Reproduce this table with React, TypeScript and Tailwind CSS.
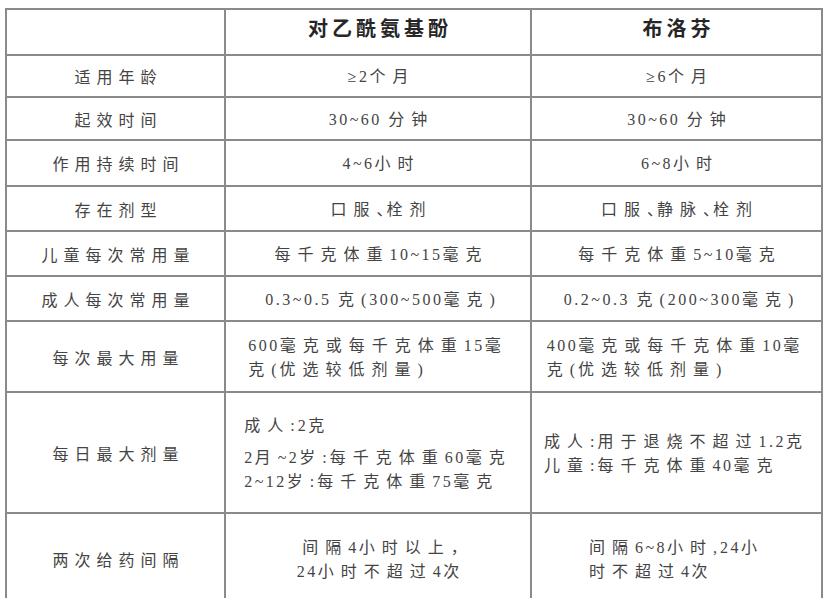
type Cell = { lines: string[]; block?: boolean; gapFirst?: boolean };

const rows: { label: string; a: Cell; b: Cell }[] = [
  { label: "适用年龄", a: { lines: ["≥2个月"] }, b: { lines: ["≥6个月"] } },
  { label: "起效时间", a: { lines: ["30~60 分钟"] }, b: { lines: ["30~60 分钟"] } },
  { label: "作用持续时间", a: { lines: ["4~6小时"] }, b: { lines: ["6~8小时"] } },
  { label: "存在剂型", a: { lines: ["口服、栓剂"] }, b: { lines: ["口服、静脉、栓剂"] } },
  { label: "儿童每次常用量", a: { lines: ["每千克体重10~15毫克"] }, b: { lines: ["每千克体重5~10毫克"] } },
  {
    label: "成人每次常用量",
    a: { lines: ["0.3~0.5 克(300~500毫克)"] },
    b: { lines: ["0.2~0.3 克(200~300毫克)"] },
  },
  {
    label: "每次最大用量",
    a: { lines: ["600毫克或每千克体重15毫", "克(优选较低剂量)"], block: true },
    b: { lines: ["400毫克或每千克体重10毫", "克(优选较低剂量)"], block: true },
  },
  {
    label: "每日最大剂量",
    a: {
      lines: ["成人:2克", "2月~2岁:每千克体重60毫克", "2~12岁:每千克体重75毫克"],
      block: true,
      gapFirst: true,
    },
    b: { lines: ["成人:用于退烧不超过1.2克", "儿童:每千克体重40毫克"], block: true },
  },
  {
    label: "两次给药间隔",
    a: { lines: ["间隔4小时以上，", "24小时不超过4次"] },
    b: { lines: ["间隔6~8小时,24小", "时不超过4次"], block: true },
  },
];

// digits get a narrow tracking, punctuation almost none, the CJK runs a wide one
const Run = ({ s, wide = "tracking-[7px]" }: { s: string; wide?: string }) => (
  <>
    {s
      .split(/([0-9.~≥ ]+|[、，,:()])/)
      .filter(Boolean)
      .map((p, i) => {
        if (/[0-9]/.test(p))
          return (
            <span key={i} className="font-['Liberation_Serif'] tracking-[2.5px]">
              {p}
            </span>
          );
        if (p === "、" || p === "，")
          return (
            <span key={i} className="tracking-[-6px]">
              {p}
            </span>
          );
        if (/[,:()]/.test(p))
          return (
            <span key={i} className="font-['Liberation_Serif'] tracking-[3px]">
              {p}
            </span>
          );
        return (
          <span key={i} className={wide}>
            {p}
          </span>
        );
      })}
  </>
);

const ValueCell = ({ cell }: { cell: Cell }) => (
  <div className="flex items-center justify-center border-b-2 border-r-2 border-[#8a8a8a]">
    {cell.block ? (
      <div className="text-left leading-[23px]">
        {cell.lines.map((l, i) => (
          <div key={i} className={cell.gapFirst && i === 0 ? "mb-[8px]" : ""}>
            <Run s={l} />
          </div>
        ))}
      </div>
    ) : (
      <div className="pl-[7px] text-center leading-[23px]">
        {cell.lines.map((l, i) => (
          <div key={i}>
            <Run s={l} />
          </div>
        ))}
      </div>
    )}
  </div>
);

export default function App() {
  return (
    <div className="h-[598px] w-[826px] overflow-hidden bg-white pl-[5px] pt-[8px]">
      <div className="grid w-[818px] grid-cols-[219px_306px_291px] grid-rows-[46px_42px_43px_46px_45px_45px_45px_71px_121px_92px] border-l-2 border-t-2 border-[#8a8a8a] font-['Noto_Sans_CJK_SC',sans-serif] text-[16px] text-[#444]">
        <div className="border-b-2 border-r-2 border-[#8a8a8a]" />
        <div className="flex items-center justify-center border-b-2 border-r-2 border-[#8a8a8a] pb-[8px] pl-[4px] text-[20px] font-bold tracking-[4px] text-[#262626]">
          对乙酰氨基酚
        </div>
        <div className="flex items-center justify-center border-b-2 border-r-2 border-[#8a8a8a] pb-[8px] pl-[4px] text-[20px] font-bold tracking-[4px] text-[#262626]">
          布洛芬
        </div>
        {rows.map((r) => (
          <div key={r.label} className="contents">
            <div className="flex items-center justify-center border-b-2 border-r-2 border-[#8a8a8a] pl-[6px]">
              <Run s={r.label} wide="tracking-[6px]" />
            </div>
            <ValueCell cell={r.a} />
            <ValueCell cell={r.b} />
          </div>
        ))}
      </div>
    </div>
  );
}
